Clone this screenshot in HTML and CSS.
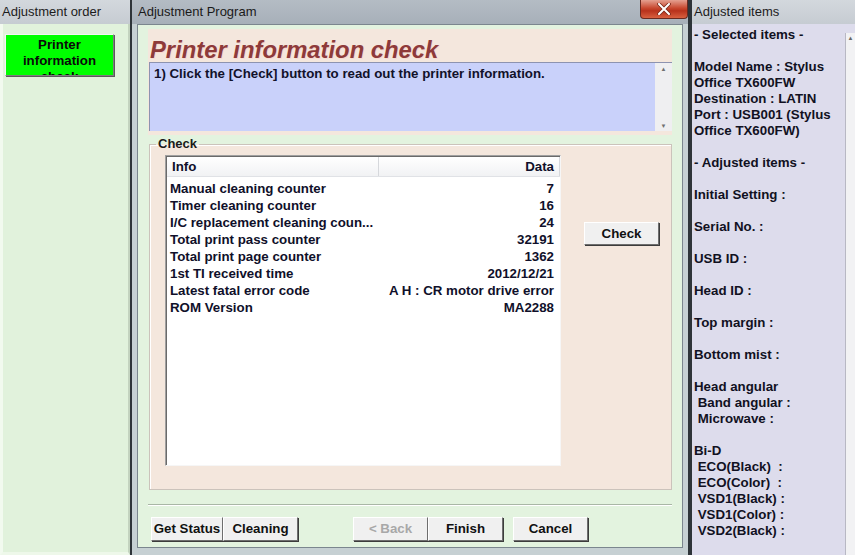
FILE: index.html
```html
<!DOCTYPE html>
<html lang="en">
<head>
    <meta charset="UTF-8">
    <title>Adjustment Program</title>
    <link rel="stylesheet" href="styles.css">
</head>
<body>
    <div class="screen">
        <div class="pane pane-order">
            <div class="pane-title">Adjustment order</div>
            <div class="pane-body">
                <div class="order-btn">Printer<br>information<br>check</div>
            </div>
        </div>

        <div class="dialog">
            <div class="dlg-title">
                <span>Adjustment Program</span>
                <div class="close-btn">
                    <svg width="14" height="12" viewBox="0 0 14 12">
                        <path d="M2 1 L12 11 M12 1 L2 11" stroke="#7a2a1a" stroke-width="3.6" stroke-linecap="round"/>
                        <path d="M2 1 L12 11 M12 1 L2 11" stroke="#ffffff" stroke-width="2" stroke-linecap="round"/>
                    </svg>
                </div>
            </div>
            <div class="dlg-frame">
                <div class="dlg-body">
                    <div class="head">
                        <h1>Printer information check</h1>
                        <div class="msg">
                            <div class="msg-text">1) Click the [Check] button to read out the printer information.</div>
                            <div class="vscroll">
                                <span>&#9650;</span>
                                <span>&#9660;</span>
                            </div>
                        </div>
                    </div>

                    <fieldset class="group">
                        <legend>Check</legend>
                        <div class="group-inner">
                            <div class="list">
                                <div class="list-head">
                                    <div class="col-info">Info</div>
                                    <div class="col-data">Data</div>
                                </div>
                                <div class="list-row"><div class="col-info">Manual cleaning counter</div><div class="col-data">7</div></div>
                                <div class="list-row"><div class="col-info">Timer cleaning counter</div><div class="col-data">16</div></div>
                                <div class="list-row"><div class="col-info">I/C replacement cleaning coun...</div><div class="col-data">24</div></div>
                                <div class="list-row"><div class="col-info">Total print pass counter</div><div class="col-data">32191</div></div>
                                <div class="list-row"><div class="col-info">Total print page counter</div><div class="col-data">1362</div></div>
                                <div class="list-row"><div class="col-info">1st TI received time</div><div class="col-data">2012/12/21</div></div>
                                <div class="list-row"><div class="col-info">Latest fatal error code</div><div class="col-data">A H : CR motor drive error</div></div>
                                <div class="list-row"><div class="col-info">ROM Version</div><div class="col-data">MA2288</div></div>
                            </div>
                            <div class="check-col">
                                <div class="btn btn-check">Check</div>
                            </div>
                        </div>
                    </fieldset>

                    <div class="sep"></div>

                    <div class="footer">
                        <div class="btn btn-status">Get Status</div>
                        <div class="btn">Cleaning</div>
                        <div class="btn btn-back disabled">&lt; Back</div>
                        <div class="btn">Finish</div>
                        <div class="btn btn-cancel">Cancel</div>
                    </div>
                </div>
            </div>
        </div>

        <div class="pane pane-items">
            <div class="pane-title">Adjusted items</div>
            <div class="pane-body">
                <div class="items">- Selected items -

Model Name : Stylus
Office TX600FW
Destination : LATIN
Port : USB001 (Stylus
Office TX600FW)

- Adjusted items -

Initial Setting :

Serial No. :

USB ID :

Head ID :

Top margin :

Bottom mist :

Head angular
 Band angular :
 Microwave :

Bi-D
 ECO(Black)  :
 ECO(Color)  :
 VSD1(Black) :
 VSD1(Color) :
 VSD2(Black) :</div>
                <div class="items-scroll"><span>&#9650;</span></div>
            </div>
        </div>
    </div>
</body>
</html>
```

FILE: styles.css
```css
* {
    box-sizing: border-box;
}

body {
    margin: 0;
    font-family: "Liberation Sans", Arial, sans-serif;
    font-size: 13px;
    color: #111;
    background: #3a4046;
}

.screen {
    display: flex;
    width: 855px;
    height: 555px;
    overflow: hidden;
}

/* side panes */
.pane {
    display: flex;
    flex-direction: column;
    height: 555px;
}

.pane-title {
    height: 24px;
    line-height: 23px;
    padding-left: 2px;
    background: linear-gradient(#d3d8dd, #c6ccd2);
    color: #1c1c1c;
    white-space: nowrap;
    overflow: hidden;
}

.pane-body {
    flex: 1;
    display: flex;
}

.pane-order {
    width: 130px;
}

.pane-order .pane-body {
    background: #e1f2dc;
    border-left: 3px solid #f2faef;
    border-right: 2px solid #c3d3bf;
    border-bottom: 3px solid #eef8ea;
    padding: 10px 0 0 2px;
    align-items: flex-start;
}

/* the third line is clipped by the button in the original program */
.order-btn {
    width: 109px;
    height: 42px;
    overflow: hidden;
    background: #00ff00;
    border: 1px solid #7e7e7e;
    border-top-color: #f4f4f4;
    border-left-color: #f4f4f4;
    box-shadow: 1px 1px 0 #5a5a5a;
    text-align: center;
    font-weight: bold;
    font-size: 13.3px;
    line-height: 16px;
    padding-top: 2px;
    color: #0a0a0a;
}

.pane-items {
    width: 165px;
}

.pane-items .pane-title {
    border-left: 2px solid #2e3439;
}

.pane-items .pane-body {
    background: #dddcec;
    border-left: 2px solid #2e3439;
}

.items {
    flex: 1;
    white-space: pre;
    font-weight: bold;
    font-size: 13.3px;
    line-height: 16px;
    padding: 3px 0 0 2px;
    color: #111122;
    overflow: hidden;
}

.items-scroll {
    width: 10px;
    margin-top: 9px;
    background: #f2f2f4;
    border-left: 1px solid #b8b8c4;
    font-size: 6px;
    color: #666;
    text-align: center;
    padding-top: 2px;
}

/* dialog window */
.dialog {
    width: 560px;
    display: flex;
    flex-direction: column;
    border-left: 2px solid #2e3439;
    border-right: 2px solid #2e3439;
    background: #aeb6be;
}

.dlg-title {
    height: 24px;
    display: flex;
    justify-content: space-between;
    align-items: flex-start;
    padding-left: 6px;
    line-height: 23px;
    color: #1a1a1a;
    background: linear-gradient(#b4bcc4, #a7b0b9);
}

.close-btn {
    width: 48px;
    height: 19px;
    display: flex;
    align-items: center;
    justify-content: center;
    background: linear-gradient(#e4a090, #c8482f 45%, #b8321c 60%, #d8603f);
    border: 1px solid #6a2a20;
    border-top: 0;
    border-radius: 0 0 4px 4px;
}

.dlg-frame {
    flex: 1;
    padding: 0 5px 7px;
    background: #c6d0d3;
}

.dlg-body {
    height: 524px;
    background: #e3f3df;
    border: 1px solid #7b868e;
    padding: 4px 10px 0 10px;
    display: flex;
    flex-direction: column;
}

.head {
    background: #f4e7dd;
    padding-bottom: 4px;
}

.head h1 {
    margin: 0;
    padding: 8px 0 0 2px;
    height: 33px;
    font-size: 23.8px;
    line-height: 26px;
    font-style: italic;
    font-weight: bold;
    color: #8e3a3a;
    text-shadow: 1px 1px 0 #f9d9cf;
}

.msg {
    display: flex;
    height: 69px;
    margin-left: 1px;
    background: #c9d1fa;
    border-top: 1px solid #8d93b0;
    border-left: 1px solid #8d93b0;
}

.msg-text {
    flex: 1;
    padding: 3px 0 0 4px;
    font-weight: bold;
    font-size: 13.3px;
    line-height: 16px;
    color: #12122a;
}

.vscroll {
    width: 17px;
    display: flex;
    flex-direction: column;
    justify-content: space-between;
    align-items: center;
    padding: 3px 0 2px;
    background: #efeff1;
    font-size: 6px;
    color: #707070;
}

/* Check group */
.group {
    margin: 2px 0 0 1px;
    padding: 4px 0 20px 15px;
    height: 353px;
    background: #f4e7dd;
    border: 1px solid #cbc3bb;
    box-shadow: inset 1px 1px 0 #ffffff;
    min-width: 0;
}

.group legend {
    margin-left: -9px;
    padding: 0 2px;
    font-size: 13px;
    font-weight: bold;
    line-height: 14px;
    color: #1a1a1a;
}

.group-inner {
    display: flex;
    height: 100%;
}

.list {
    width: 396px;
    height: 311px;
    background: #ffffff;
    border: 1px solid #f6f6f6;
    border-top-color: #a0a0a0;
    border-left-color: #a0a0a0;
    box-shadow: inset 1px 1px 0 #6a6a6a;
    font-weight: bold;
    font-size: 13.3px;
    color: #10102a;
}

.list-head {
    display: flex;
    height: 20px;
    line-height: 20px;
    margin: 1px 0 0 1px;
    background: linear-gradient(#ffffff, #f1f2f4);
    border-bottom: 1px solid #e0e2e6;
}

.list-head .col-info {
    padding-left: 5px;
    border-right: 1px solid #d6d8dc;
}

.list-head .col-data {
    border-right: 1px solid #d6d8dc;
}

.list-head + .list-row {
    margin-top: 3px;
}

.list-row {
    display: flex;
    height: 17px;
    line-height: 17px;
}

.col-info {
    width: 212px;
    padding-left: 4px;
    white-space: nowrap;
    overflow: hidden;
}

.col-data {
    width: 181px;
    text-align: right;
    padding-right: 5px;
    white-space: nowrap;
}

.check-col {
    padding: 67px 0 0 23px;
}

/* buttons */
.btn {
    width: 75px;
    height: 24px;
    line-height: 22px;
    text-align: center;
    font-weight: bold;
    font-size: 13.3px;
    color: #111;
    background: #f0f0f0;
    border: 1px solid #6e6e6e;
    border-top-color: #ffffff;
    border-left-color: #ffffff;
    box-shadow: 1px 1px 0 #3c3c3c;
}

.btn.disabled {
    color: #a8a8a8;
}

.btn-check {
    height: 23px;
}

.sep {
    margin: 14px 0 0 0;
    height: 2px;
    border-top: 1px solid #a9b7a6;
    border-bottom: 1px solid #ffffff;
}

.footer {
    display: flex;
    padding: 11px 0 0 3px;
}

.btn-status {
    width: 72px;
}

.btn-back {
    margin-left: 55px;
}

.btn-cancel {
    margin-left: 10px;
}
```
